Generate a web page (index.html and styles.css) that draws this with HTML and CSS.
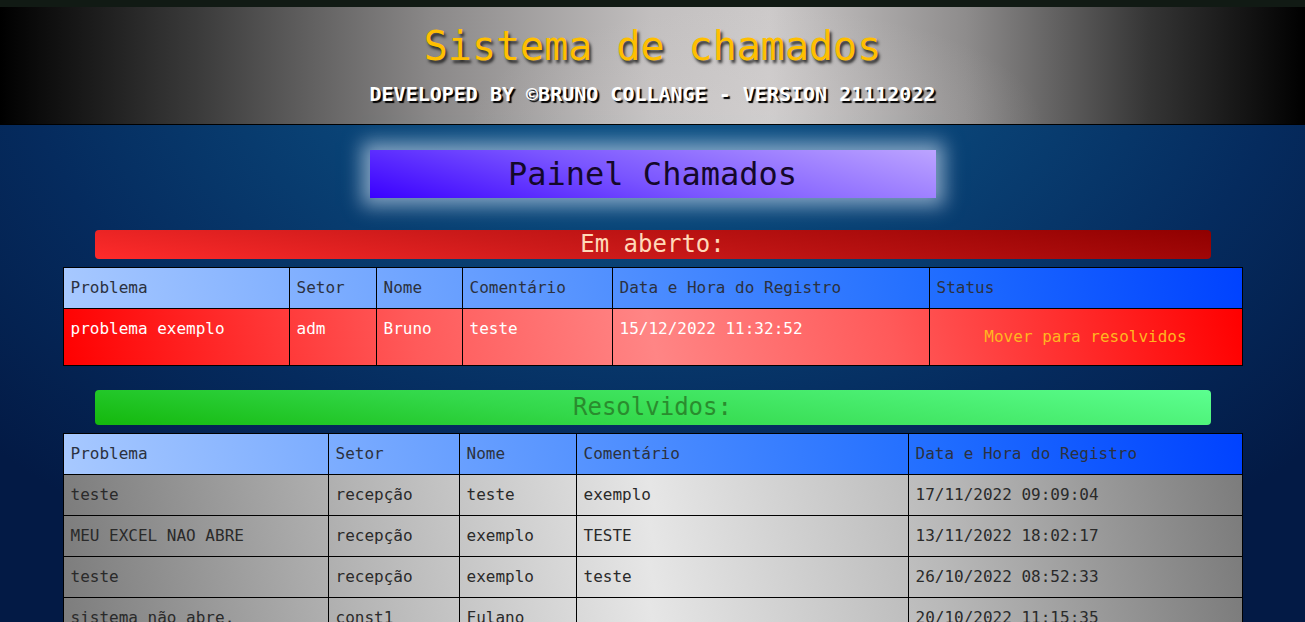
FILE: index.html
```html
<!DOCTYPE html>
<html lang="pt-BR">
<head>
<meta charset="utf-8">
<title>Sistema de chamados</title>
<link rel="stylesheet" href="styles.css">
</head>
<body>
<div class="topstrip"></div>
<header class="site-header">
  <h1 class="site-title">Sistema de chamados</h1>
  <p class="site-sub">DEVELOPED BY ©BRUNO COLLANGE - VERSION 21112022</p>
</header>
<main class="content">
  <h2 class="panel-title">Painel Chamados</h2>

  <h3 class="section-bar bar-open">Em aberto:</h3>
  <table class="grid grid-open">
    <colgroup>
      <col class="o1"><col class="o2"><col class="o3"><col class="o4"><col class="o5"><col class="o6">
    </colgroup>
    <thead>
      <tr class="head-row">
        <th>Problema</th><th>Setor</th><th>Nome</th><th>Comentário</th><th>Data e Hora do Registro</th><th>Status</th>
      </tr>
    </thead>
    <tbody>
      <tr class="open-row">
        <td>problema exemplo</td><td>adm</td><td>Bruno</td><td>teste</td><td>15/12/2022 11:32:52</td>
        <td class="status-cell"><button class="move-btn">Mover para resolvidos</button></td>
      </tr>
    </tbody>
  </table>

  <h3 class="section-bar bar-done">Resolvidos:</h3>
  <table class="grid grid-done">
    <colgroup>
      <col class="r1"><col class="r2"><col class="r3"><col class="r4"><col class="r5">
    </colgroup>
    <thead>
      <tr class="head-row">
        <th>Problema</th><th>Setor</th><th>Nome</th><th>Comentário</th><th>Data e Hora do Registro</th>
      </tr>
    </thead>
    <tbody>
      <tr class="done-row"><td>teste</td><td>recepção</td><td>teste</td><td>exemplo</td><td>17/11/2022 09:09:04</td></tr>
      <tr class="done-row"><td>MEU EXCEL NAO ABRE</td><td>recepção</td><td>exemplo</td><td>TESTE</td><td>13/11/2022 18:02:17</td></tr>
      <tr class="done-row"><td>teste</td><td>recepção</td><td>exemplo</td><td>teste</td><td>26/10/2022 08:52:33</td></tr>
      <tr class="done-row"><td>sistema não abre.</td><td>const1</td><td>Fulano</td><td></td><td>20/10/2022 11:15:35</td></tr>
      <tr class="done-row"><td>impressora</td><td>adm</td><td>Bruno</td><td>teste</td><td>10/10/2022 10:20:11</td></tr>
    </tbody>
  </table>
</main>
</body>
</html>
```

FILE: styles.css
```css
* { box-sizing: border-box; }

html {
  background: #031a45;
}

body {
  margin: 0;
  min-height: 100vh;
  font-family: "DejaVu Sans Mono", "Liberation Mono", monospace;
  font-size: 16px;
  background:
    radial-gradient(ellipse 70% 90% at 50% 0%, #0d5a8f 0%, #0a4679 35%, #052b5e 70%, #031a45 100%);
  background-color: #031a45;
}

.topstrip {
  height: 7px;
  background: #111a14;
}

.site-header {
  padding: 16px 0 18px;
  text-align: center;
  border-bottom: 1px solid #000;
  background:
    radial-gradient(ellipse 22% 100% at 58% 100%, rgba(215, 212, 212, 0.35) 0%, rgba(215, 212, 212, 0) 100%),
    linear-gradient(90deg, #000 0%, #3a3a3a 15%, #8a8888 33%, #c2bfbf 50%, #cdcaca 59%, #8e8c8c 74%, #353535 88%, #000 100%);
}

.site-title {
  margin: 0;
  font-size: 40px;
  line-height: 46px;
  font-weight: normal;
  color: #ffbf00;
  text-shadow: 2px 3px 3px #2a2a2a;
}

.site-sub {
  margin: 13px 0 0;
  font-size: 20px;
  line-height: 24px;
  font-weight: bold;
  color: #fff;
  text-shadow: 2px 2px 1px #000;
}

.content {
  padding: 25px 0 40px;
  display: flex;
  flex-direction: column;
  align-items: center;
}

.panel-title {
  margin: 0;
  width: 566px;
  height: 48px;
  line-height: 48px;
  text-align: center;
  font-size: 32px;
  font-weight: normal;
  color: #14082a;
  background: linear-gradient(15deg, #3a00ff 0%, #7a55ff 45%, #bca4ff 100%);
  box-shadow: 0 0 18px 8px rgba(230, 240, 255, 0.55);
}

.section-bar {
  margin: 0;
  width: 1116px;
  text-align: center;
  font-size: 24px;
  font-weight: normal;
  border-radius: 4px;
}

.bar-open {
  margin-top: 32px;
  height: 29px;
  line-height: 28px;
  color: #ffd9b8;
  background: linear-gradient(8deg, #ff2b2b 0%, #cc1a1a 40%, #900000 100%);
}

.bar-done {
  margin-top: 24px;
  height: 35px;
  line-height: 35px;
  color: #2a8c2e;
  background: linear-gradient(8deg, #14b80c 0%, #33d84a 40%, #5cff90 100%);
}

.grid {
  width: 1179px;
  border-collapse: collapse;
  table-layout: fixed;
}

.grid-open { margin-top: 8px; }
.grid-done { margin-top: 8px; }

.grid th,
.grid td {
  border: 1px solid #000;
  padding: 10px 7px;
  line-height: 20px;
  text-align: left;
  vertical-align: top;
  font-weight: normal;
  font-size: 16px;
}

.head-row {
  background: linear-gradient(80deg, #a8c9ff 0%, #78aaff 25%, #4b8cff 50%, #1f6cff 75%, #0042ff 100%);
}

.head-row th { color: #2b3140; }

.open-row {
  background: linear-gradient(78deg, #ff0000 0%, #ff5a5a 30%, #ff8585 50%, #ff5a5a 70%, #ff0000 100%);
}

.open-row td {
  color: #fff;
  height: 57px;
}

.status-cell {
  text-align: center !important;
}

.move-btn {
  font-family: inherit;
  font-size: 16px;
  line-height: 20px;
  padding: 8px 16px;
  background: none;
  border: none;
  color: #ffb620;
  cursor: pointer;
}

.done-row {
  background: linear-gradient(78deg, #7c7c7c 0%, #b4b4b4 25%, #e6e6e6 50%, #b8b8b8 75%, #7c7c7c 100%);
}

.done-row td { color: #2a2a2a; }

.o1 { width: 226px; }
.o2 { width: 87px; }
.o3 { width: 86px; }
.o4 { width: 150px; }
.o5 { width: 317px; }
.o6 { width: 313px; }

.r1 { width: 265px; }
.r2 { width: 131px; }
.r3 { width: 117px; }
.r4 { width: 332px; }
.r5 { width: 334px; }
```
